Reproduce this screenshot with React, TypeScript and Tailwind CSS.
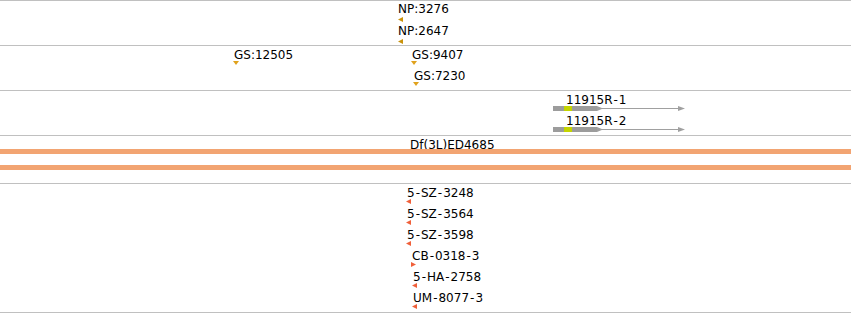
import React from "react";

type Dir = "left" | "right" | "down";
// x = genomic position on the canvas, dx = arrow offset from the label
type Feat = { label: string; x: number; dx: number; dir: Dir };

const GOLD = "#c9920a";
const AMBER = "#e0a21c";
const RED = "#f0603a";

const npRows: Feat[][] = [
  [{ label: "NP:3276", x: 398, dx: 0, dir: "left" }],
  [{ label: "NP:2647", x: 398, dx: 0, dir: "left" }],
];

const gsRows: Feat[][] = [
  [
    { label: "GS:12505", x: 234, dx: -1, dir: "down" },
    { label: "GS:9407", x: 412, dx: -1, dir: "down" },
  ],
  [{ label: "GS:7230", x: 414, dx: -1, dir: "down" }],
];

const szRows: Feat[][] = [
  [{ label: "5-SZ-3248", x: 407, dx: -1, dir: "left" }],
  [{ label: "5-SZ-3564", x: 407, dx: -1, dir: "left" }],
  [{ label: "5-SZ-3598", x: 407, dx: -1, dir: "left" }],
  [{ label: "CB-0318-3", x: 412, dx: -1, dir: "right" }],
  [{ label: "5-HA-2758", x: 413, dx: -1, dir: "left" }],
  [{ label: "UM-8077-3", x: 413, dx: -1, dir: "left" }],
];

function Arrow({ dir, color }: { dir: Dir; color: string }) {
  if (dir === "down")
    return (
      <svg width="6" height="4" viewBox="0 0 6 4">
        <polygon points="0,0 6,0 3,4" fill={color} />
      </svg>
    );
  if (dir === "right")
    return (
      <svg width="5" height="5" viewBox="0 0 5 5">
        <polygon points="0,0 5,2.5 0,5" fill={color} />
      </svg>
    );
  return (
    <svg width="5" height="5" viewBox="0 0 5 5">
      <polygon points="5,0 0,2.5 5,5" fill={color} />
    </svg>
  );
}

// hyphens in the original labels are drawn a bit wider
function Label({ text }: { text: string }) {
  const parts = text.split("-");
  return (
    <span className="whitespace-nowrap text-[12px] leading-[14px] text-black">
      {parts.map((p, i) => (
        <React.Fragment key={i}>
          {i > 0 && <span className="mx-[1px]">-</span>}
          {p}
        </React.Fragment>
      ))}
    </span>
  );
}

function MarkTrack({ rows, color, rowH, gap, h }: { rows: Feat[][]; color: string; rowH: string; gap: string; h: string }) {
  return (
    <div className={`flex flex-col pt-[2px] border-t border-[#c0c0c0] ${h}`}>
      {rows.map((row, i) => (
        <div key={i} className={`relative ${rowH}`}>
          {row.map((f) => (
            <div key={f.label} className={`absolute flex flex-col items-start ${gap}`} style={{ left: f.x }}>
              <Label text={f.label} />
              <span className="flex" style={{ marginLeft: f.dx }}>
                <Arrow dir={f.dir} color={color} />
              </span>
            </div>
          ))}
        </div>
      ))}
    </div>
  );
}

function Transcript({ label }: { label: string }) {
  return (
    <div className="h-[21px] pl-[553px] flex flex-col">
      <div className="pl-[13px] flex">
        <Label text={label} />
      </div>
      <svg className="-mt-px" width="134" height="5" viewBox="0 0 134 5">
        <rect x="0" y="0" width="44" height="5" fill="#9c9c9c" />
        <rect x="11" y="0" width="8" height="5" fill="#c4d400" />
        <line x1="44" y1="2.5" x2="128" y2="2.5" stroke="#a0a0a0" strokeWidth="1" />
        <polygon points="44,0 50,2.5 44,5" fill="#a0a0a0" />
        <polygon points="125,0 132,2.5 125,5" fill="#a0a0a0" />
      </svg>
    </div>
  );
}

export default function App() {
  return (
    <div className="w-[851px] h-[313px] overflow-hidden bg-white font-['DejaVu_Sans',sans-serif]">
      <MarkTrack rows={npRows} color={GOLD} rowH="h-[22px]" gap="gap-px" h="h-[45px] !pt-px" />
      <MarkTrack rows={gsRows} color={AMBER} rowH="h-[21px]" gap="-space-y-px" h="h-[45px]" />

      {/* transcripts */}
      <div className="h-[45px] pt-[2px] border-t border-[#c0c0c0] flex flex-col">
        <Transcript label="11915R-1" />
        <Transcript label="11915R-2" />
      </div>

      {/* deficiency */}
      <div className="h-[48px] pt-[2px] border-t border-[#c0c0c0] flex flex-col">
        <div className="pl-[410px] flex h-[12px]">
          <Label text="Df(3L)ED4685" />
        </div>
        <div className="-mt-px h-[5px] bg-[#f2a472]" />
        <div className="mt-[11px] h-[5px] bg-[#f2a472]" />
      </div>

      <MarkTrack rows={szRows} color={RED} rowH="h-[21px]" gap="-space-y-px" h="h-[129px]" />
      <div className="border-t border-[#c0c0c0]" />
    </div>
  );
}
